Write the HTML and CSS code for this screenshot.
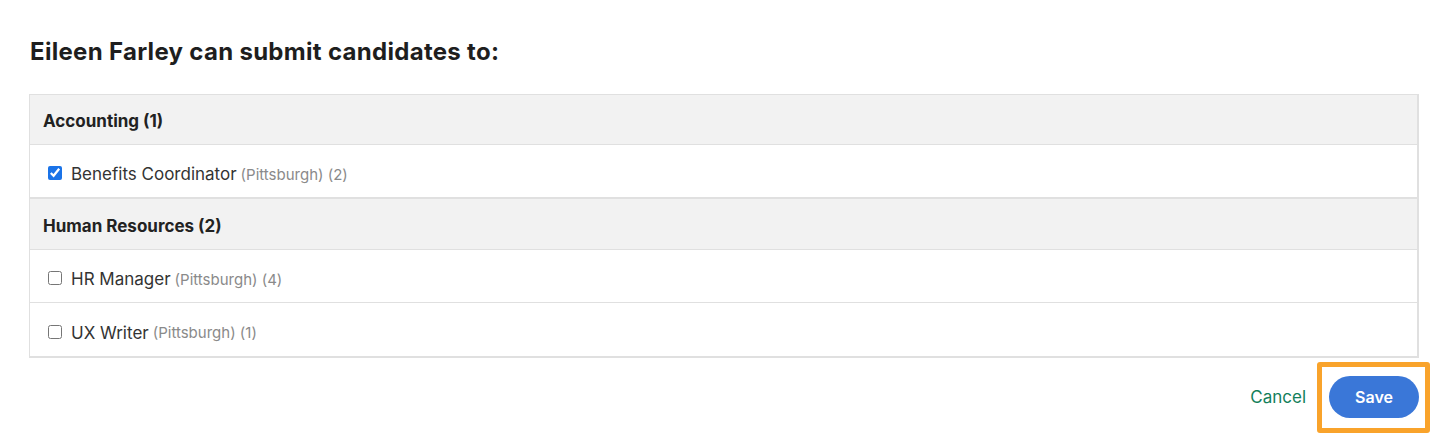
FILE: index.html
```html
<!DOCTYPE html>
<html>
<head>
<meta charset="utf-8">
<link rel="stylesheet" href="styles.css">
</head>
<body>
<div class="page">
  <h1 class="title">Eileen Farley can submit candidates to:</h1>
  <div class="list">
    <div class="group-head">Accounting (1)</div>
    <label class="item"><input type="checkbox" class="cb" checked><span class="name">Benefits Coordinator</span><span class="meta">(Pittsburgh) (2)</span></label>
    <div class="group-head sep">Human Resources (2)</div>
    <label class="item"><input type="checkbox" class="cb"><span class="name">HR Manager</span><span class="meta">(Pittsburgh) (4)</span></label>
    <label class="item last"><input type="checkbox" class="cb"><span class="name">UX Writer</span><span class="meta">(Pittsburgh) (1)</span></label>
  </div>
  <div class="actions">
    <button class="cancel" type="button">Cancel</button>
    <span class="save-wrap"><button class="save" type="button">Save</button><span class="highlight"></span></span>
  </div>
</div>
</body>
</html>
```
FILE: styles.css
```css
html, body {
  margin: 0;
  padding: 0;
  background: #fff;
}
body {
  font-family: Inter, "Liberation Sans", Arial, sans-serif;
  color: #1e1e1e;
}
.page {
  padding: 37px 28px 30px 29px;
}
.title {
  margin: 0 0 28px 1px;
  font-size: 24px;
  font-weight: 700;
  line-height: 29px;
  letter-spacing: 0.3px;
  color: #1e1e1e;
}
.list {
  border: 1px solid #e0e0e0;
  border-right-width: 2px;
  border-bottom-width: 2px;
}
.group-head {
  height: 50px;
  display: flex;
  align-items: center;
  padding-left: 13px;
  padding-top: 3px;
  box-sizing: border-box;
  background: #f2f2f2;
  font-size: 17px;
  font-weight: 700;
  color: #222;
  border-bottom: 1px solid #e0e0e0;
}
.group-head.sep {
  border-top: 1px solid #e0e0e0;
  height: 52px;
}
.item {
  height: 53px;
  box-sizing: border-box;
  padding-top: 6px;
  display: flex;
  align-items: center;
  padding-left: 18px;
  border-bottom: 1px solid #e0e0e0;
  font-size: 17px;
  color: #333;
}
.item.last {
  border-bottom: none;
}
.cb {
  margin: 0 9px 2px 0;
  width: 14px;
  height: 14px;
  accent-color: #1a73e8;
}
.name {
  margin-right: 4px;
}
.meta {
  font-size: 15px;
  color: #8a8a8a;
}
.actions {
  display: flex;
  justify-content: flex-end;
  align-items: center;
  gap: 23px;
  margin-top: 18px;
}
.cancel {
  background: none;
  border: none;
  padding: 0;
  font-family: inherit;
  font-size: 17px;
  color: #12805c;
  cursor: pointer;
}
.save-wrap {
  position: relative;
  display: inline-flex;
}
.save {
  width: 90px;
  height: 42px;
  border: none;
  border-radius: 21px;
  background: #3a77d8;
  color: #fff;
  font-family: inherit;
  font-size: 16px;
  font-weight: 600;
  cursor: pointer;
}
.highlight {
  position: absolute;
  left: -12px;
  top: -14px;
  right: -11px;
  bottom: -15px;
  border: 5px solid #f9a32b;
  border-radius: 3px;
  pointer-events: none;
}
```
